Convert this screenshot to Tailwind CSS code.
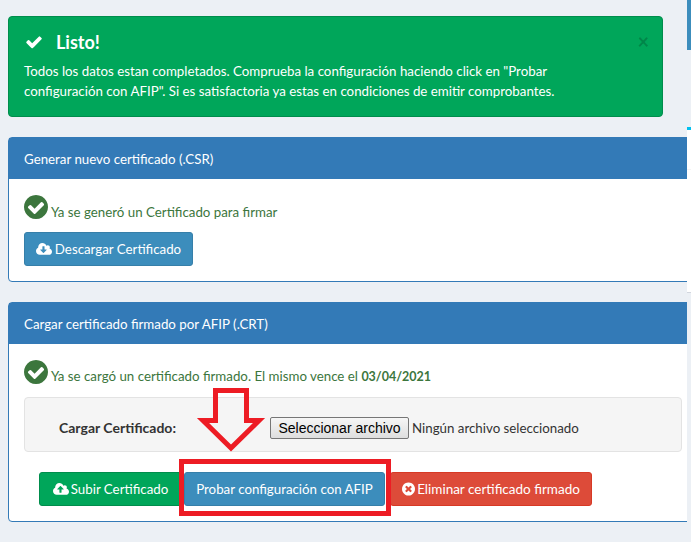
<!DOCTYPE html>
<html lang="es">

<head>
   <meta charset="UTF-8">
   <meta name="viewport" content="width=device-width, initial-scale=1.0">
   <title>Configuración AFIP</title>
   <script src="https://cdn.jsdelivr.net/npm/@tailwindcss/browser@4"></script>
</head>

<body class="bg-[#ecf0f5] font-['Lato','Noto_Sans',sans-serif] text-[13.3px] leading-5 h-[542px] overflow-hidden">
   <div class="relative flex h-[542px] w-[691px] overflow-hidden">
      <main class="w-[687px] overflow-hidden pl-2 pt-4 shrink-0">
         <!-- alerta -->
         <div class="w-[655px] h-[101px] bg-[#00a65a] border border-[#008d4c] rounded text-white px-[15px] pt-[15px] relative">
            <button class="absolute right-[13px] top-[12px] text-[20px] leading-6 font-bold text-black/20">×</button>
            <h4 class="flex items-center text-[18px] leading-5 font-bold mb-[9px]">
               <svg class="w-[18px] h-[18px] ml-px mr-[13px]" viewBox="0 0 1792 1792" fill="currentColor"><path d="M1671 566q0 40-28 68l-724 724-136 136q-28 28-68 28t-68-28l-136-136-362-362q-28-28-28-68t28-68l136-136q28-28 68-28t68 28l294 295 656-657q28-28 68-28t68 28l136 136q28 28 28 68z"/></svg>
               Listo!
            </h4>
            <p>Todos los datos estan completados. Comprueba la configuración haciendo click en "Probar<br>configuración con AFIP". Si es satisfactoria ya estas en condiciones de emitir comprobantes.</p>
         </div>

         <!-- generar -->
         <section class="mt-5 w-[690px] h-[145px] bg-white border border-[#337ab7] rounded">
            <div class="bg-[#337ab7] text-white h-[41px] px-[15px] flex items-center">Generar nuevo certificado (.CSR)</div>
            <div class="px-[15px] pt-[16px]">
               <div class="flex items-end text-[#3c763d] h-[24px]">
                  <svg class="w-[24px] h-[24px] shrink-0" viewBox="128 128 1536 1536" fill="currentColor"><path d="M1412 734q0-28-18-46l-91-90q-19-19-45-19t-45 19l-408 407-226-226q-19-19-45-19t-45 19l-91 90q-18 18-18 46 0 27 18 45l362 362q19 19 45 19 27 0 46-19l543-543q18-18 18-45zm252 162q0 209-103 385.5t-279.5 279.5-385.5 103-385.5-103-279.5-279.5-103-385.5 103-385.5 279.5-279.5 385.5-103 385.5 103 279.5 279.5 103 385.5z"/></svg>
                  <span class="ml-[3px] leading-5 -mb-[3px]">Ya se generó un Certificado para firmar</span>
               </div>
               <button class="mt-[13px] w-[169px] h-[34px] bg-[#3c8dbc] border border-[#367fa9] rounded-[3px] text-white flex items-center justify-center gap-[3px]">
                  <svg class="w-[16px] h-[15px]" viewBox="0 0 1920 1792" fill="currentColor"><path d="M1280 928q0-14-9-23t-23-9h-224v-352q0-13-9.5-22.5t-22.5-9.5h-192q-13 0-22.5 9.5t-9.5 22.5v352h-224q-13 0-22.5 9.5t-9.5 22.5q0 14 9 23l352 352q9 9 23 9t23-9l351-352q10-12 10-24zm640 224q0 159-112.5 271.5t-271.5 112.5h-1088q-185 0-316.5-131.5t-131.5-316.5q0-130 70-240t188-165q-2-30-2-43 0-212 150-362t362-150q156 0 285.5 87t188.5 231q71-62 166-62 106 0 181 75t75 181q0 76-41 138 130 31 213.5 135.5t83.5 238.5z"/></svg>
                  Descargar Certificado
               </button>
            </div>
         </section>

         <!-- cargar -->
         <section class="mt-5 w-[690px] h-[220px] bg-white border border-[#337ab7] rounded">
            <div class="bg-[#337ab7] text-white h-[41px] px-[15px] flex items-center">Cargar certificado firmado por AFIP (.CRT)</div>
            <div class="px-[15px] pt-[16px]">
               <div class="flex items-end text-[#3c763d] h-[24px]">
                  <svg class="w-[24px] h-[24px] shrink-0" viewBox="128 128 1536 1536" fill="currentColor"><path d="M1412 734q0-28-18-46l-91-90q-19-19-45-19t-45 19l-408 407-226-226q-19-19-45-19t-45 19l-91 90q-18 18-18 46 0 27 18 45l362 362q19 19 45 19 27 0 46-19l543-543q18-18 18-45zm252 162q0 209-103 385.5t-279.5 279.5-385.5 103-385.5-103-279.5-279.5-103-385.5 103-385.5 279.5-279.5 385.5-103 385.5 103 279.5 279.5 103 385.5z"/></svg>
                  <span class="ml-[3px] leading-5 -mb-[3px]">Ya se cargó un certificado firmado. El mismo vence el <b class="text-[12.5px]">03/04/2021</b></span>
               </div>
               <div class="mt-[13px] h-[55px] bg-[#f5f5f5] border border-[#e3e3e3] rounded flex items-center pl-[34px]">
                  <label class="font-bold text-[14px] text-[#333] w-[211px] mt-[6px]">Cargar Certificado:</label>
                  <span class="w-[139px] h-[22px] shrink-0 mt-[6px] bg-linear-to-b from-[#f6f6f6] to-[#dedede] border border-[#767676] rounded-[2px] font-['Liberation_Sans',sans-serif] text-[14px] leading-5 text-black text-center">Seleccionar archivo</span>
                  <span class="ml-[3px] mt-[6px] text-[#333]">Ningún archivo seleccionado</span>
               </div>
               <div class="mt-5 ml-[15px] flex">
                  <button class="w-[143px] h-[34px] bg-[#00a65a] border border-[#008d4c] rounded-[3px] text-white flex items-center justify-center gap-[2px]">
                     <svg class="w-[16px] h-[15px]" viewBox="0 0 1920 1792" fill="currentColor"><path d="M1280 864q0-14-9-23l-352-352q-9-9-23-9t-23 9l-351 351q-10 12-10 24 0 14 9 23t23 9h224v352q0 13 9.5 22.5t22.5 9.5h192q13 0 22.5-9.5t9.5-22.5v-352h224q13 0 22.5-9.5t9.5-22.5zm640 288q0 159-112.5 271.5t-271.5 112.5h-1088q-185 0-316.5-131.5t-131.5-316.5q0-130 70-240t188-165q-2-30-2-43 0-212 150-362t362-150q156 0 285.5 87t188.5 231q71-62 166-62 106 0 181 75t75 181q0 76-41 138 130 31 213.5 135.5t83.5 238.5z"/></svg>
                     Subir Certificado
                  </button>
                  <button class="ml-[2px] w-[201px] h-[34px] bg-[#3c8dbc] border border-[#367fa9] rounded-[3px] text-white">Probar configuración con AFIP</button>
                  <button class="ml-[5px] w-[202px] h-[34px] bg-[#dd4b39] border border-[#d73925] rounded-[3px] text-white text-[13.5px] flex items-center justify-center gap-[2px]">
                     <svg class="w-[13px] h-[14px]" viewBox="128 128 1536 1536" fill="currentColor"><path d="M1277 1122q0-26-19-45l-181-181 181-181q19-19 19-45 0-27-19-46l-90-90q-19-19-46-19-26 0-45 19l-181 181-181-181q-19-19-45-19-27 0-46 19l-90 90q-19 19-19 46 0 26 19 45l181 181-181 181q-19 19-19 45 0 27 19 46l90 90q19 19 46 19 26 0 45-19l181-181 181 181q19 19 45 19 27 0 46-19l90-90q19-19 19-46zm387-226q0 209-103 385.5t-279.5 279.5-385.5 103-385.5-103-279.5-279.5-103-385.5 103-385.5 279.5-279.5 385.5-103 385.5 103 279.5 279.5 103 385.5z"/></svg>
                     Eliminar certificado firmado
                  </button>
               </div>
            </div>
         </section>
      </main>

      <!-- borde de la columna vecina -->
      <aside class="w-1 shrink-0 flex flex-col">
         <div class="h-[50px] bg-[#3c8dbc]"></div>
         <div class="h-[77px]"></div>
         <div class="h-[3px] bg-[#00c0ef]"></div>
         <div class="h-10 bg-white border-b border-[#f4f4f4]"></div>
         <div class="h-[123px] bg-white border-b border-[#d2d6de]"></div>
      </aside>

      <!-- anotaciones sobre la captura -->
      <svg class="absolute left-[195px] top-[386px] w-[72px] h-[68px] pointer-events-none" viewBox="195 386 72 68" fill="none" stroke="#ed1c24" stroke-width="5"><path d="M215.500 390.500H246.500V420.500H259L231 448L203 420.500H215.500Z"/></svg>
      <div class="absolute left-[179px] top-[459px] w-[212px] h-[57px] border-[5px] border-[#ed1c24] pointer-events-none"></div>
   </div>
</body>

</html>
